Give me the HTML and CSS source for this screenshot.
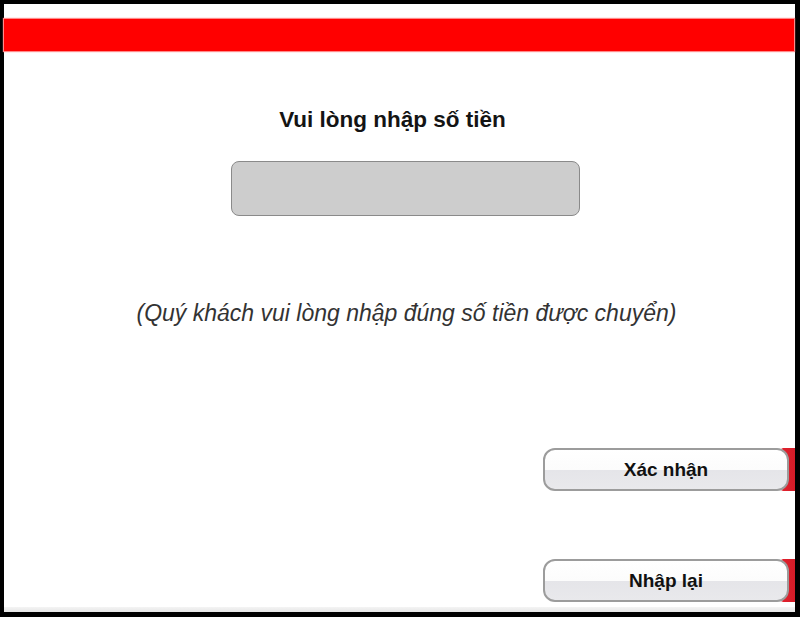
FILE: index.html
```html
<!DOCTYPE html>
<html lang="vi">
<head>
<meta charset="utf-8">
<title>Nhập số tiền</title>
<link rel="stylesheet" href="styles.css">
</head>
<body>
<div class="frame">
  <div class="screen">
    <div class="topbar"></div>
    <h1 class="title">Vui lòng nhập số tiền</h1>
    <div class="amount"></div>
    <p class="note">(Quý khách vui lòng nhập đúng số tiền được chuyển)</p>
    <div class="actions">
      <div class="slot slot-first"><button class="btn">Xác nhận</button></div>
      <div class="slot slot-second"><button class="btn">Nhập lại</button></div>
    </div>
    <div class="spacer"></div>
    <div class="bottomstrip"></div>
  </div>
</div>
</body>
</html>
```
FILE: styles.css
```css
html, body {
  margin: 0;
  padding: 0;
  background: #000;
}
.frame {
  width: 800px;
  height: 617px;
  box-sizing: border-box;
  padding: 4px 5px 5px 4px;
  background: #000;
}
.screen {
  width: 100%;
  height: 100%;
  background: #fff;
  display: flex;
  flex-direction: column;
  align-items: center;
  font-family: "Liberation Sans", Arial, sans-serif;
}
.topbar {
  align-self: stretch;
  margin-top: 15px;
  margin-right: 1px;
  height: 32px;
  background: #ff0000;
  box-shadow: 0 0 1px 1px #ff8a8a;
}
.title {
  margin: 56px 14px 0 0;
  font-size: 22.5px;
  line-height: 26px;
  font-weight: bold;
  color: #141414;
}
.amount {
  margin: 28px 0 0 12px;
  width: 349px;
  height: 55px;
  box-sizing: border-box;
  background: #cdcdcd;
  border: 1px solid #8a8a8a;
  border-radius: 8px;
}
.note {
  margin: 84px 0 0 14px;
  font-size: 23px;
  line-height: 27px;
  font-style: italic;
  color: #333;
}
.actions {
  align-self: stretch;
  display: flex;
  flex-direction: column;
  align-items: flex-end;
  margin-top: 121px;
}
.slot {
  width: 252px;
  height: 43px;
  display: flex;
  background: linear-gradient(to right, transparent 0, transparent 238px, #e0202c 240px, #d41c28 100%);
}
.slot-second {
  margin-top: 68px;
}
.btn {
  width: 246px;
  height: 43px;
  box-sizing: border-box;
  border: 2px solid #9c9c9c;
  border-radius: 12px;
  background: linear-gradient(to bottom, #ffffff 0, #fcfcfc 50%, #e5e5e9 52%, #e9e9ec 100%);
  font-family: "Liberation Sans", Arial, sans-serif;
  font-size: 19px;
  font-weight: bold;
  color: #111;
  padding: 0;
  display: flex;
  align-items: center;
  justify-content: center;
}
.spacer {
  flex: 1;
}
.bottomstrip {
  align-self: stretch;
  height: 5px;
  background: linear-gradient(to bottom, #f4f4f4, #e6e6e6);
}
```
